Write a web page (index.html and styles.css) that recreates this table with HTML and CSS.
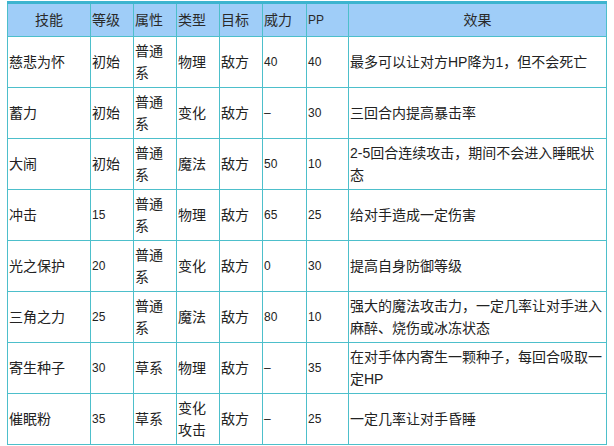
FILE: index.html
```html
<!DOCTYPE html>
<html lang="zh">
<head>
<meta charset="utf-8">
<title>技能表</title>
<link rel="stylesheet" href="styles.css">
</head>
<body>
<table class="skills">
  <colgroup>
    <col class="c-name"><col class="c-lv"><col class="c-attr"><col class="c-type"><col class="c-tgt"><col class="c-pow"><col class="c-pp"><col class="c-eff">
  </colgroup>
  <thead>
    <tr>
      <th class="center">技能</th><th>等级</th><th>属性</th><th>类型</th><th>目标</th><th>威力</th><th class="num">PP</th><th class="center">效果</th>
    </tr>
  </thead>
  <tbody>
    <tr><td>慈悲为怀</td><td>初始</td><td>普通系</td><td>物理</td><td>敌方</td><td class="num">40</td><td class="num">40</td><td>最多可以让对方HP降为1，但不会死亡</td></tr>
    <tr><td>蓄力</td><td>初始</td><td>普通系</td><td>变化</td><td>敌方</td><td class="num">–</td><td class="num">30</td><td>三回合内提高暴击率</td></tr>
    <tr><td>大闹</td><td>初始</td><td>普通系</td><td>魔法</td><td>敌方</td><td class="num">50</td><td class="num">10</td><td>2-5回合连续攻击，期间不会进入睡眠状态</td></tr>
    <tr><td>冲击</td><td class="num">15</td><td>普通系</td><td>物理</td><td>敌方</td><td class="num">65</td><td class="num">25</td><td>给对手造成一定伤害</td></tr>
    <tr><td>光之保护</td><td class="num">20</td><td>普通系</td><td>变化</td><td>敌方</td><td class="num">0</td><td class="num">30</td><td>提高自身防御等级</td></tr>
    <tr><td>三角之力</td><td class="num">25</td><td>普通系</td><td>魔法</td><td>敌方</td><td class="num">80</td><td class="num">10</td><td>强大的魔法攻击力，一定几率让对手进入麻醉、烧伤或冰冻状态</td></tr>
    <tr><td>寄生种子</td><td class="num">30</td><td>草系</td><td>物理</td><td>敌方</td><td class="num">–</td><td class="num">35</td><td>在对手体内寄生一颗种子，每回合吸取一定HP</td></tr>
    <tr><td>催眠粉</td><td class="num">35</td><td>草系</td><td>变化攻击</td><td>敌方</td><td class="num">–</td><td class="num">25</td><td>一定几率让对手昏睡</td></tr>
  </tbody>
</table>
</body>
</html>
```

FILE: styles.css
```css
html, body {
  margin: 0;
  background: #ffffff;
}
body {
  padding: 1px 0 0 7px;
  font-family: "Liberation Sans", "Noto Sans CJK SC", sans-serif;
  font-size: 14px;
  color: #222222;
}
.skills {
  border-collapse: collapse;
  table-layout: fixed;
  width: 599px;
  border-top: 3px solid #3db4cf;
}
.c-name { width: 83px; }
.c-lv { width: 43px; }
.c-attr { width: 43px; }
.c-type { width: 43px; }
.c-tgt { width: 43px; }
.c-pow { width: 44px; }
.c-pp { width: 42px; }
.c-eff { width: 258px; }

.skills th,
.skills td {
  border: 1px solid #4dbfcb;
  text-align: left;
  vertical-align: middle;
  line-height: 22px;
  font-weight: normal;
  word-break: break-all;
}
.skills th {
  background: #9fcdf8;
  padding: 5px 1px;
  color: #2a2a2a;
}
.skills td {
  padding: 3px 1px;
  height: 44px;
}
.skills th.center {
  text-align: center;
}
.skills .num {
  font-size: 12px;
}
```
